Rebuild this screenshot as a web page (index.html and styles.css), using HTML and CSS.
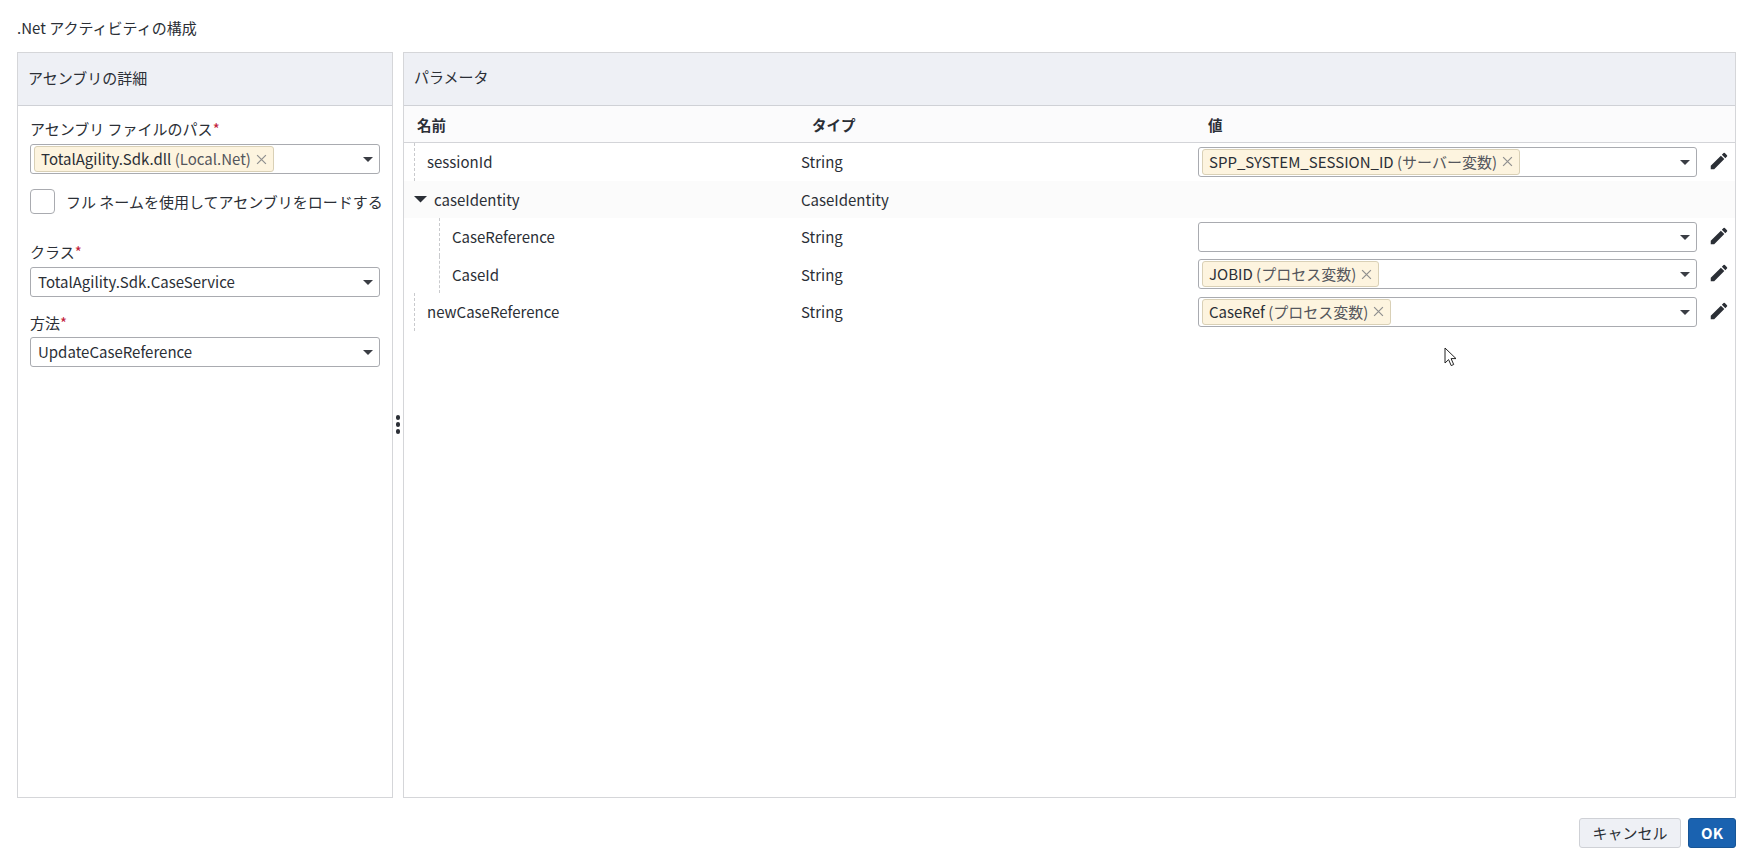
FILE: index.html
```html
<!DOCTYPE html>
<html lang="ja">
<head>
  <meta charset="UTF-8" />
  <title>.Net アクティビティの構成</title>
  <link rel="stylesheet" href="styles.css">
</head>
<body>
  <div class="dialog">
    <h1 class="dialog-title">.Net アクティビティの構成</h1>

    <div class="panes">
      <section class="pane pane-left">
        <h2 class="pane-header">アセンブリの詳細</h2>
        <div class="form">
          <label class="label">アセンブリ ファイルのパス<span class="req">*</span></label>
          <div class="combo combo-chip">
            <span class="chip"><span>TotalAgility.Sdk.dll <span class="chip-sub">(Local.Net)</span></span><svg class="chip-x" viewBox="0 0 10 10"><path d="M1 1l8 8M9 1l-8 8"/></svg></span>
            <svg class="caret" viewBox="0 0 10 5"><path d="M0 0h10L5 5z"/></svg>
          </div>

          <div class="check-row">
            <span class="checkbox"></span>
            <span>フル ネームを使用してアセンブリをロードする</span>
          </div>

          <label class="label label-class">クラス<span class="req">*</span></label>
          <div class="combo">
            <span class="combo-text">TotalAgility.Sdk.CaseService</span>
            <svg class="caret" viewBox="0 0 10 5"><path d="M0 0h10L5 5z"/></svg>
          </div>

          <label class="label label-method">方法<span class="req">*</span></label>
          <div class="combo">
            <span class="combo-text">UpdateCaseReference</span>
            <svg class="caret" viewBox="0 0 10 5"><path d="M0 0h10L5 5z"/></svg>
          </div>
        </div>
      </section>

      <div class="splitter">
        <span class="dot"></span>
        <span class="dot"></span>
        <span class="dot"></span>
      </div>

      <section class="pane pane-right">
        <h2 class="pane-header pane-header-right">パラメータ</h2>

        <div class="grid-head">
          <div class="head-name">名前</div>
          <div class="head-type">タイプ</div>
          <div class="head-value">値</div>
        </div>

        <div class="row">
          <div class="cell-name"><span class="guide">sessionId</span></div>
          <div class="cell-type">String</div>
          <div class="cell-value">
            <div class="combo combo-chip">
              <span class="chip"><span>SPP_SYSTEM_SESSION_ID <span class="chip-sub">(サーバー変数)</span></span><svg class="chip-x" viewBox="0 0 10 10"><path d="M1 1l8 8M9 1l-8 8"/></svg></span>
              <svg class="caret" viewBox="0 0 10 5"><path d="M0 0h10L5 5z"/></svg>
            </div>
            <svg class="pencil" viewBox="0 0 24 24"><path d="M3 17.25V21h3.75L17.81 9.94l-3.75-3.75L3 17.25zM20.71 7.04a1 1 0 0 0 0-1.41l-2.34-2.34a1 1 0 0 0-1.41 0l-1.83 1.83 3.75 3.75 1.83-1.83z"/></svg>
          </div>
        </div>

        <div class="row row-group">
          <div class="cell-name cell-group">
            <svg class="tree-arrow" viewBox="0 0 12 6"><path d="M0 0h12L6 6z"/></svg>
            <span>caseIdentity</span>
          </div>
          <div class="cell-type">CaseIdentity</div>
          <div class="cell-value"></div>
        </div>

        <div class="row">
          <div class="cell-name cell-child"><span class="guide">CaseReference</span></div>
          <div class="cell-type">String</div>
          <div class="cell-value">
            <div class="combo combo-chip">
              <svg class="caret" viewBox="0 0 10 5"><path d="M0 0h10L5 5z"/></svg>
            </div>
            <svg class="pencil" viewBox="0 0 24 24"><path d="M3 17.25V21h3.75L17.81 9.94l-3.75-3.75L3 17.25zM20.71 7.04a1 1 0 0 0 0-1.41l-2.34-2.34a1 1 0 0 0-1.41 0l-1.83 1.83 3.75 3.75 1.83-1.83z"/></svg>
          </div>
        </div>

        <div class="row">
          <div class="cell-name cell-child"><span class="guide">CaseId</span></div>
          <div class="cell-type">String</div>
          <div class="cell-value">
            <div class="combo combo-chip">
              <span class="chip"><span>JOBID <span class="chip-sub">(プロセス変数)</span></span><svg class="chip-x" viewBox="0 0 10 10"><path d="M1 1l8 8M9 1l-8 8"/></svg></span>
              <svg class="caret" viewBox="0 0 10 5"><path d="M0 0h10L5 5z"/></svg>
            </div>
            <svg class="pencil" viewBox="0 0 24 24"><path d="M3 17.25V21h3.75L17.81 9.94l-3.75-3.75L3 17.25zM20.71 7.04a1 1 0 0 0 0-1.41l-2.34-2.34a1 1 0 0 0-1.41 0l-1.83 1.83 3.75 3.75 1.83-1.83z"/></svg>
          </div>
        </div>

        <div class="row">
          <div class="cell-name"><span class="guide">newCaseReference</span></div>
          <div class="cell-type">String</div>
          <div class="cell-value">
            <div class="combo combo-chip">
              <span class="chip"><span>CaseRef <span class="chip-sub">(プロセス変数)</span></span><svg class="chip-x" viewBox="0 0 10 10"><path d="M1 1l8 8M9 1l-8 8"/></svg></span>
              <svg class="caret" viewBox="0 0 10 5"><path d="M0 0h10L5 5z"/></svg>
            </div>
            <svg class="pencil" viewBox="0 0 24 24"><path d="M3 17.25V21h3.75L17.81 9.94l-3.75-3.75L3 17.25zM20.71 7.04a1 1 0 0 0 0-1.41l-2.34-2.34a1 1 0 0 0-1.41 0l-1.83 1.83 3.75 3.75 1.83-1.83z"/></svg>
          </div>
        </div>
      </section>
    </div>

    <div class="buttons">
      <button class="btn btn-cancel">キャンセル</button>
      <button class="btn btn-ok">OK</button>
    </div>
  </div>

  <!-- mouse pointer that was caught in the screenshot -->
  <svg class="pointer" viewBox="0 0 14 20"><path d="M1 1v15l3.6-3.4 2.6 6 2.5-1.1-2.6-5.9H12z"/></svg>
</body>
</html>
```

FILE: styles.css
```css
* {
  box-sizing: border-box;
}

html, body {
  height: 100%;
}

body {
  margin: 0;
  background-color: #fff;
  color: #2b2f36;
  font-family: "Noto Sans CJK JP", "Noto Sans", sans-serif;
  font-size: 15px;
  overflow: hidden;
}

.dialog {
  height: 864px;
  padding: 0 17px;
  display: flex;
  flex-direction: column;
}

.dialog-title {
  margin: 0;
  height: 52px;
  padding-top: 17px;
  font-size: 15px;
  line-height: 22px;
  font-weight: 400;
}

.panes {
  height: 746px;
  display: flex;
}

.pane {
  border: 1px solid #d5d6d9;
  display: flex;
  flex-direction: column;
}

.pane-left {
  width: 376px;
}

.pane-right {
  flex: 1;
}

.pane-header {
  margin: 0;
  flex: none;
  height: 53px;
  padding: 0 0 0 10px;
  background-color: #eef0f5;
  border-bottom: 1px solid #cfd1d6;
  font-size: 15px;
  font-weight: 400;
  line-height: 50px;
}

.pane-header-right {
  line-height: 48px;
}

.splitter {
  width: 10px;
  display: flex;
  flex-direction: column;
  align-items: center;
  justify-content: center;
  gap: 2.5px;
  padding-bottom: 1px;
}

.dot {
  width: 4.5px;
  height: 4.5px;
  border-radius: 50%;
  background-color: #2b2f36;
}

.form {
  padding: 11px 12px 0 12px;
}

.label {
  display: block;
  height: 27px;
  line-height: 24px;
}

.label-class {
  margin-top: 26px;
  height: 27px;
}

.label-method {
  margin-top: 14px;
  height: 26px;
}

.req {
  color: #c2213a;
}

.combo {
  position: relative;
  height: 30px;
  border: 1px solid #a9abb0;
  border-radius: 3px;
  background-color: #fff;
  display: flex;
  align-items: center;
  padding-left: 7px;
}

.combo-chip {
  padding-left: 3px;
  flex: 1;
}

.combo-text {
  line-height: 28px;
}

.caret {
  position: absolute;
  right: 6px;
  top: 12px;
  width: 10px;
  height: 5px;
  fill: #3a3d44;
}

.chip {
  display: inline-flex;
  align-items: center;
  gap: 5px;
  height: 26px;
  padding: 0 6px;
  background-color: #fdf4df;
  border: 1px solid #d9d0b6;
  border-radius: 3px;
  white-space: nowrap;
  line-height: 24px;
}

.chip-sub {
  color: #54565c;
}

.chip-x {
  width: 11px;
  height: 11px;
  stroke: #8f8f8f;
  stroke-width: 1.1;
  fill: none;
}

.check-row {
  display: flex;
  align-items: center;
  gap: 11px;
  margin-top: 15px;
  height: 25px;
  white-space: nowrap;
}

.checkbox {
  flex: none;
  width: 25px;
  height: 25px;
  border: 1px solid #a9abb0;
  border-radius: 4px;
}

.grid-head {
  height: 37px;
  flex: none;
  display: grid;
  grid-template-columns: 393px 393px 1fr;
  align-items: center;
  background-color: #fbfbfc;
  border-bottom: 1px solid #d3d4d8;
  font-weight: 700;
  font-size: 14.5px;
}

.head-name {
  padding-left: 13px;
}

.head-type {
  padding-left: 15px;
}

.head-value {
  padding-left: 18px;
}

.row {
  height: 37.5px;
  flex: none;
  display: grid;
  grid-template-columns: 393px 393px 1fr;
  align-items: center;
}

.row-group {
  background-color: #fbfbfb;
}

.cell-name {
  height: 100%;
  padding-left: 10px;
  display: flex;
  align-items: center;
}

.cell-group {
  gap: 7px;
}

.tree-arrow {
  width: 13px;
  height: 6.5px;
  fill: #2b2f36;
}

.cell-child {
  padding-left: 35px;
}

.guide {
  height: 100%;
  display: flex;
  align-items: center;
  border-left: 1px dashed #c9cacd;
  padding-left: 12px;
}

.cell-type {
  padding-left: 4px;
}

.cell-value {
  display: flex;
  align-items: center;
  padding: 0 7px 0 8px;
}

.pencil {
  flex: none;
  width: 22px;
  height: 22px;
  margin: 0 -1.5px 2px 10.5px;
  fill: #2b2f36;
}

.buttons {
  margin-top: 20px;
  display: flex;
  justify-content: flex-end;
  gap: 7px;
}

.btn {
  height: 30px;
  border-radius: 3px;
  font-family: inherit;
  font-size: 15px;
  line-height: 26px;
  padding: 0;
}

.btn-cancel {
  width: 102px;
  background-color: #eef0f5;
  border: 1px solid #cfd1d6;
  color: #2b2f36;
}

.btn-ok {
  width: 48px;
  background-color: #1a62b0;
  border: 1px solid #175596;
  color: #fff;
  font-weight: 700;
}

.pointer {
  position: absolute;
  left: 1444px;
  top: 347px;
  width: 14px;
  height: 20px;
  fill: #fff;
  stroke: #222;
  stroke-width: 1;
}
```
